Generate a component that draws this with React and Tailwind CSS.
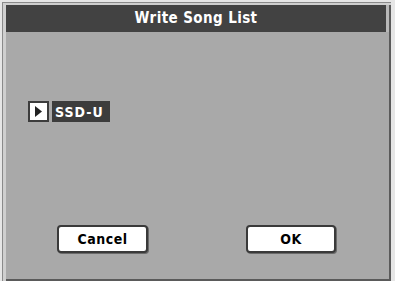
export default function App() {
  const font = { fontFamily: '"DejaVu Sans Condensed", "DejaVu Sans", "Liberation Sans", sans-serif', fontStretch: 'condensed' };
  return (
    <div className="w-[395px] h-[281px] bg-[#e6e6e6] pl-[2px] pt-[2px] pr-[4px] pb-0 flex" style={font}>
      <div className="flex-1 flex flex-col border-l-[1px] border-t-[1px] border-[#8a8a8a] pl-[3px] pt-[2px] pr-0 bg-[#cfcfcf]">
        <div className="flex-1 flex flex-col border-r-[2px] border-b-[2px] border-[#5a5a5a] bg-[#a9a9a9]">
          <div className="h-[27px] bg-[#424242] flex items-center justify-center border-r-[3px] border-[#b8b8b8]">
            <span className="text-white font-bold text-[15px] tracking-[0.4px] leading-none">Write Song List</span>
          </div>
          <div className="flex-1 flex flex-col px-[22px]">
            <div className="mt-[69px] flex items-center gap-[3px]">
              <div className="w-[21px] h-[21px] bg-[#3c3c3c] p-[2px]">
                <div className="w-full h-full bg-white flex items-center justify-center">
                  <svg width="9" height="11" viewBox="0 0 9 11"><path d="M1 0 L8 5.5 L1 11 Z" fill="#222" /></svg>
                </div>
              </div>
              <div className="h-[21px] w-[58px] bg-[#3c3c3c] flex items-center pl-[3px]">
                <span className="text-white font-bold text-[14px] tracking-[1px] leading-none">SSD-U</span>
              </div>
            </div>
            <div className="mt-[103px] flex justify-between pl-[29px] pr-[31px]">
              <div className="w-[91px] h-[28px] bg-white border-2 border-[#3a3a3a] rounded-[4px] flex items-center justify-center shadow-[1px_1px_0_#6a6a6a]">
                <span className="text-black font-bold text-[14px] tracking-[0.5px] leading-none">Cancel</span>
              </div>
              <div className="w-[90px] h-[28px] bg-white border-2 border-[#3a3a3a] rounded-[4px] flex items-center justify-center shadow-[1px_1px_0_#6a6a6a]">
                <span className="text-black font-bold text-[14px] tracking-[0.5px] leading-none">OK</span>
              </div>
            </div>
          </div>
        </div>
      </div>
    </div>
  );
}
